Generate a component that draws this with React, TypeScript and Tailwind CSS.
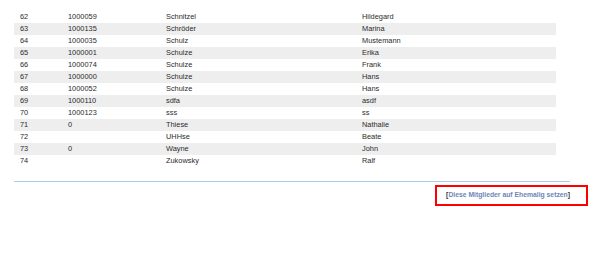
const rows: [string, string, string, string][] = [
  ["62", "1000059", "Schnitzel", "Hildegard"],
  ["63", "1000135", "Schröder", "Marina"],
  ["64", "1000035", "Schulz", "Mustemann"],
  ["65", "1000001", "Schulze", "Erika"],
  ["66", "1000074", "Schulze", "Frank"],
  ["67", "1000000", "Schulze", "Hans"],
  ["68", "1000052", "Schulze", "Hans"],
  ["69", "1000110", "sdfa", "asdf"],
  ["70", "1000123", "sss", "ss"],
  ["71", "0", "Thiese", "Nathalie"],
  ["72", "", "UHHse", "Beate"],
  ["73", "0", "Wayne", "John"],
  ["74", "", "Zukowsky", "Ralf"],
];

export default function App() {
  return (
    <div
      className="w-[605px] h-[253px] bg-white pt-[11px] text-[7.4px] text-[#2b2b2b]"
      style={{ fontFamily: '"Liberation Sans", Arial, sans-serif' }}
    >
      <div className="ml-[14px] w-[542px]">
        {rows.map((r, i) => (
          <div
            key={r[0]}
            className={`grid grid-cols-[48px_98px_196px_200px] h-[12px] items-center leading-none ${i % 2 === 1 ? "bg-[#eeeeee]" : ""}`}
          >
            {r.map((c, j) => (
              <span key={j} className="pl-[6px] whitespace-nowrap">
                {c}
              </span>
            ))}
          </div>
        ))}
      </div>

      <div className="ml-[14px] mt-[14px] w-[556px] h-px bg-[#a8cbe9]" />

      <div className="flex justify-end pr-[17px] mt-[3px]">
        <div className="w-[153px] h-[21px] border-2 border-[#ff0000] flex items-center justify-end pr-[16px] font-bold text-[6.8px] leading-none">
          <span className="text-[#333333]">[</span>
          <a className="text-[#6d86b6]">Diese Mitglieder auf Ehemalig setzen</a>
          <span className="text-[#333333]">]</span>
        </div>
      </div>
    </div>
  );
}
